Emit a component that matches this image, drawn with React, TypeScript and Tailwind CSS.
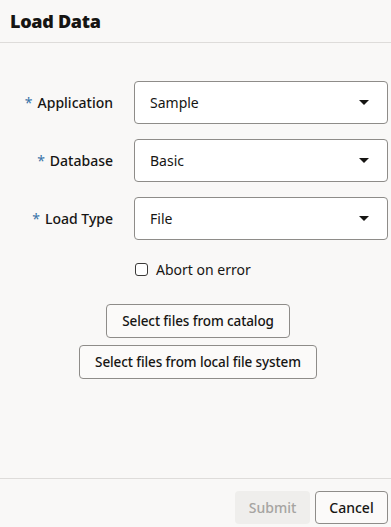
import React from 'react'

type field = {
    label: string
    value: string
}

const fields: field[] = [
    { label: 'Application', value: 'Sample' },
    { label: 'Database', value: 'Basic' },
    { label: 'Load Type', value: 'File' },
]

const Caret = () => (
    <svg width="10" height="5" viewBox="0 0 10 5" className="text-[#161513]">
        <path d="M0 0h10L5 5z" fill="currentColor" />
    </svg>
)

const App: React.FC = () => {
    return (
        <div className="w-[391px] h-[527px] bg-[#f9f8f7] flex flex-col text-[#161513] font-['Noto_Sans',sans-serif]">
            <div className="h-[43px] border-b border-[#dedcda] flex items-center px-[10px] shrink-0">
                <h1 className="text-[18px] font-black tracking-[-0.3px]">Load Data</h1>
            </div>

            <div className="flex-1 flex flex-col pt-[38px]">
                <div className="flex flex-col gap-[15px]">
                    {fields.map((f: field, i: number) => (
                        <div className="flex items-center" key={i}>
                            <div className="w-[113px] text-right text-[14px] font-medium">
                                <span className="text-[#3a74a8] font-normal mr-[5px]">*</span>
                                <span>{f.label}</span>
                            </div>
                            <div className="ml-[21px] w-[254px] h-[43px] bg-white border border-[#8e8c89] rounded-[4px] flex items-center justify-between pl-[15px] pr-[18px] text-[14px]">
                                <span>{f.value}</span>
                                <Caret />
                            </div>
                        </div>
                    ))}
                </div>

                <label className="flex items-center ml-[135px] mt-[19px] text-[14px] gap-[8px]">
                    <span className="w-[13px] h-[13px] border border-[#3b3a38] rounded-[3px] bg-white" />
                    <span>Abort on error</span>
                </label>

                <div className="flex flex-col items-center gap-[7px] mt-[24px] pl-[5px]">
                    <button className="h-[34px] px-[15px] border border-[#8e8c89] rounded-[4px] bg-[#fbfaf9] text-[13.5px] font-medium tracking-[-0.1px]">
                        Select files from catalog
                    </button>
                    <button className="h-[34px] px-[15px] border border-[#8e8c89] rounded-[4px] bg-[#fbfaf9] text-[13.5px] font-medium tracking-[-0.1px]">
                        Select files from local file system
                    </button>
                </div>
            </div>

            <div className="h-[49px] border-t border-[#dedcda] flex items-start justify-end gap-[5px] pr-[3px] pt-[12px] shrink-0">
                <button className="h-[33px] w-[75px] rounded-[4px] bg-[#efeeec] text-[#a6a4a1] text-[14px] font-medium">
                    Submit
                </button>
                <button className="h-[33px] w-[73px] rounded-[4px] border border-[#8e8c89] bg-[#fbfaf9] text-[14px] font-medium">
                    Cancel
                </button>
            </div>
        </div>
    )
}

export default App
